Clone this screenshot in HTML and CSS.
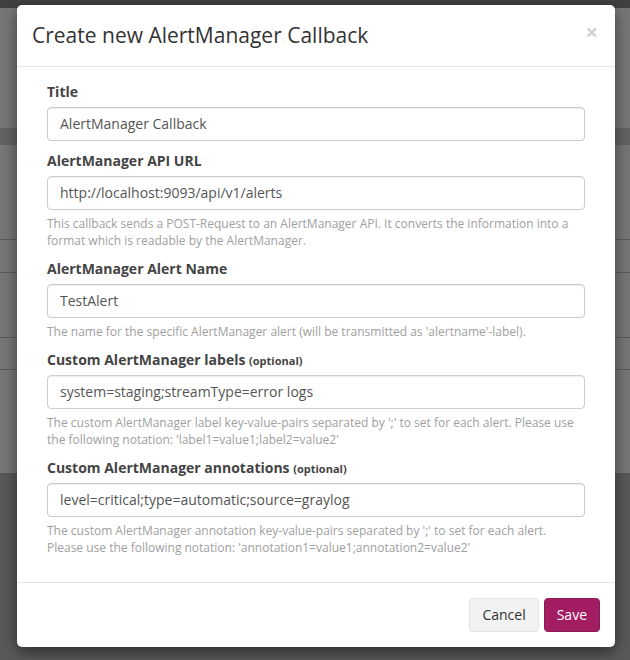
FILE: index.html
```html
<!DOCTYPE html>
<html>
<head>
<meta charset="utf-8">
<link rel="stylesheet" href="styles.css">
</head>
<body>
<div class="page">
  <div class="topbar"></div>
  <div class="nav"></div>
  <div class="band"></div>
  <div class="content">
    <div class="row r1"></div>
    <div class="row r2"></div>
    <div class="row r3"></div>
    <div class="row r4"></div>
    <div class="row r5"></div>
  </div>
  <div class="lower"></div>
</div>

<div class="modal">
  <div class="modal-header">
    <h3 class="modal-title">Create new AlertManager Callback</h3>
    <span class="close">×</span>
  </div>
  <div class="modal-body">
    <div class="form-group">
      <label class="control-label">Title</label>
      <div class="form-control">AlertManager Callback</div>
    </div>
    <div class="form-group">
      <label class="control-label">AlertManager API URL</label>
      <div class="form-control">http://localhost:9093/api/v1/alerts</div>
      <p class="help-block">This callback sends a POST-Request to an AlertManager API. It converts the information into a format which is readable by the AlertManager.</p>
    </div>
    <div class="form-group">
      <label class="control-label">AlertManager Alert Name</label>
      <div class="form-control">TestAlert</div>
      <p class="help-block">The name for the specific AlertManager alert (will be transmitted as 'alertname'-label).</p>
    </div>
    <div class="form-group">
      <label class="control-label">Custom AlertManager labels <small class="opt">(optional)</small></label>
      <div class="form-control">system=staging;streamType=error logs</div>
      <p class="help-block">The custom AlertManager label key-value-pairs separated by ';' to set for each alert. Please use the following notation: 'label1=value1;label2=value2'</p>
    </div>
    <div class="form-group">
      <label class="control-label">Custom AlertManager annotations <small class="opt">(optional)</small></label>
      <div class="form-control">level=critical;type=automatic;source=graylog</div>
      <p class="help-block">The custom AlertManager annotation key-value-pairs separated by ';' to set for each alert. Please use the following notation: 'annotation1=value1;annotation2=value2'</p>
    </div>
  </div>
  <div class="modal-footer">
    <button class="btn btn-default">Cancel</button>
    <button class="btn btn-primary">Save</button>
  </div>
</div>
</body>
</html>
```

FILE: styles.css
```css
* { box-sizing: border-box; }
html, body { margin: 0; padding: 0; }
body {
  width: 630px;
  height: 660px;
  overflow: hidden;
  font-family: "Open Sans", "DejaVu Sans", sans-serif;
  font-size: 14px;
  line-height: 1.42857;
  color: #333;
  background: #595959;
}
.page { display: flex; flex-direction: column; height: 660px; }
.topbar { height: 8px; background: #414141; }
.nav { height: 120px; background: #777; }
.band { height: 17px; background: #636363; }
.content { background: #777; display: flex; flex-direction: column; }
.row { border-bottom: 1px solid #5c5c5c; }
.r1 { height: 95px; }
.r2 { height: 33px; }
.r3 { height: 65px; }
.r4 { height: 32px; }
.r5 { height: 103px; border-bottom: none; }
.lower { flex: 1; background: #595959; }

.modal {
  position: absolute;
  left: 17px;
  top: 5px;
  width: 598px;
  background: #fff;
  border-radius: 5px;
  box-shadow: 0 5px 15px rgba(0,0,0,0.5);
}
.modal-header {
  padding: 15px;
  border-bottom: 1px solid #e5e5e5;
  position: relative;
}
.modal-title {
  margin: 0;
  font-size: 21px;
  font-weight: 400;
  line-height: 31px;
  color: #333;
}
.close {
  position: absolute;
  right: 17px;
  top: 15px;
  font-size: 22px;
  font-weight: 700;
  line-height: 1;
  color: #000;
  opacity: 0.18;
}
.modal-body {
  padding: 15px 30px 26px;
}
.form-group { margin-bottom: 10px; }
.form-group:last-child { margin-bottom: 0; }
.control-label {
  display: block;
  font-weight: 700;
  color: #444;
  margin-bottom: 5px;
}
.opt { font-size: 11px; font-weight: 700; }
.form-control {
  height: 34px;
  padding: 6px 12px;
  border: 1px solid #ccc;
  border-radius: 4px;
  color: #555;
  font-size: 14px;
  box-shadow: inset 0 1px 1px rgba(0,0,0,0.075);
}
.help-block {
  margin: 5px 0 0;
  font-size: 12px;
  line-height: 17px;
  color: #a0a0a0;
}
.modal-footer {
  padding: 15px;
  border-top: 1px solid #e5e5e5;
  display: flex;
  justify-content: flex-end;
  gap: 5px;
}
.btn {
  font-family: inherit;
  font-size: 14px;
  line-height: 1.42857;
  padding: 6px 12px;
  border-radius: 4px;
  border: 1px solid transparent;
  height: 34px;
}
.btn-default {
  background: #f1f2f2;
  border-color: #e3e3e3;
  color: #333;
}
.btn-primary {
  background: #a21d62;
  border-color: #8c1854;
  color: #fff;
}
```
